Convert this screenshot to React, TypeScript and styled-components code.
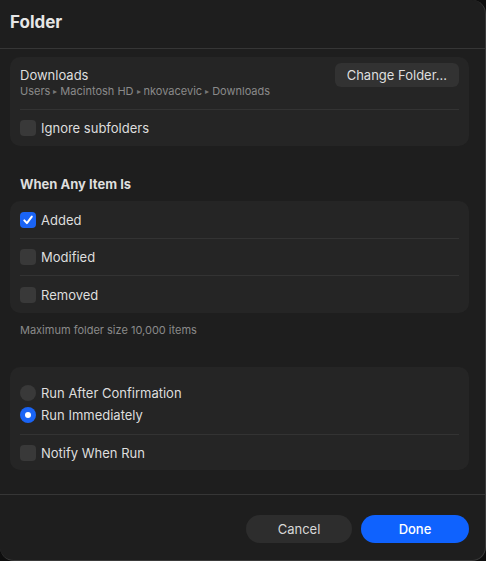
import { createGlobalStyle, styled } from "styled-components";

const GlobalStyle = createGlobalStyle`
  html, body {
    margin: 0;
    padding: 0;
    background: #0e0e0e;
  }
  body {
    font-family: Inter, "Noto Sans", sans-serif;
    -webkit-font-smoothing: antialiased;
  }
`;

const Window = styled.div`
  width: 486px;
  height: 561px;
  box-sizing: border-box;
  background: #1e1e1e;
  border-right: 1px solid #3a3a3a;
  border-bottom: 1px solid #3a3a3a;
  border-radius: 0 14px 14px 14px;
  display: flex;
  flex-direction: column;
  overflow: hidden;
  color: #dedede;
`;

const Header = styled.div`
  height: 49px;
  box-sizing: border-box;
  padding: 12px 10px 0;
  border-bottom: 1px solid #363636;
`;

const Title = styled.h1`
  margin: 0;
  font-size: 17px;
  line-height: 20px;
  font-weight: 700;
  color: #e6e6e6;
`;

const Content = styled.div`
  flex: 1;
  padding: 8px 16px 0 10px;
  display: flex;
  flex-direction: column;
`;

const Card = styled.div<{ $top?: number }>`
  background: #252525;
  border-radius: 10px;
  padding: 0 10px;
  margin-top: ${(p) => p.$top ?? 0}px;
`;

const FolderRow = styled.div`
  display: flex;
  align-items: flex-start;
  justify-content: space-between;
  height: 53px;
  box-sizing: border-box;
  padding-top: 6px;
  border-bottom: 1px solid #333;
`;

const FolderInfo = styled.div`
  padding-top: 4px;
`;

const FolderName = styled.div`
  font-size: 13px;
  line-height: 16px;
  color: #dedede;
`;

const FolderPath = styled.div`
  height: 16px;
  font-size: 11px;
  line-height: 16px;
  color: #8a8a8a;
`;

const Arrow = styled.span`
  font-size: 8px;
  line-height: 0;
  margin: 0 3px;
  vertical-align: 1px;
  color: #777;
`;

const SmallButton = styled.button`
  height: 24px;
  padding: 0 12px;
  border: none;
  border-radius: 6px;
  background: #323232;
  color: #dedede;
  font-family: inherit;
  font-size: 13px;
`;

const Row = styled.div<{ $h: number; $line?: boolean }>`
  box-sizing: border-box;
  height: ${(p) => p.$h}px;
  display: flex;
  align-items: center;
  gap: 5px;
  font-size: 13px;
  color: #dedede;
  border-top: ${(p) => (p.$line ? "1px solid #333" : "none")};
`;

const Box = styled.span<{ $on?: boolean }>`
  width: 16px;
  height: 16px;
  border-radius: 4px;
  background: ${(p) => (p.$on ? "#1a64f5" : "#393939")};
  display: flex;
  align-items: center;
  justify-content: center;
  flex-shrink: 0;
`;

const Radio = styled.span<{ $on?: boolean }>`
  width: 16px;
  height: 16px;
  border-radius: 50%;
  background: ${(p) => (p.$on ? "#1a64f5" : "#393939")};
  display: flex;
  align-items: center;
  justify-content: center;
  flex-shrink: 0;
  &::after {
    content: "";
    display: ${(p) => (p.$on ? "block" : "none")};
    width: 6px;
    height: 6px;
    border-radius: 50%;
    background: #fff;
  }
`;

const SectionTitle = styled.div`
  margin: 30px 0 9px 10px;
  font-size: 13px;
  line-height: 16px;
  font-weight: 700;
  color: #dedede;
`;

const Note = styled.div`
  margin: 10px 0 0 10px;
  font-size: 11px;
  line-height: 14px;
  color: #8a8a8a;
`;

const RadioGroup = styled.div`
  padding: 15px 0 8px;
  border-bottom: 1px solid #333;
`;

const Footer = styled.div`
  height: 66px;
  box-sizing: border-box;
  border-top: 1px solid #363636;
  padding: 20px 16px 0 0;
  display: flex;
  justify-content: flex-end;
  gap: 9px;
`;

const PillButton = styled.button<{ $primary?: boolean; $w: number }>`
  width: ${(p) => p.$w}px;
  height: 28px;
  border: none;
  border-radius: 14px;
  background: ${(p) => (p.$primary ? "#0f62fe" : "#2d2d2d")};
  color: ${(p) => (p.$primary ? "#ffffff" : "#d8d8d8")};
  font-family: inherit;
  font-size: 13px;
  font-weight: ${(p) => (p.$primary ? 500 : 400)};
`;

function Check({ on }: { on?: boolean }) {
  return (
    <Box $on={on}>
      {on ? (
        <svg width="12" height="12" viewBox="0 0 12 12">
          <path
            d="M2.3 6.4 L4.9 9.1 L9.8 2.6"
            fill="none"
            stroke="#fff"
            strokeWidth="2"
            strokeLinecap="round"
            strokeLinejoin="round"
          />
        </svg>
      ) : null}
    </Box>
  );
}

export default function App() {
  return (
    <>
      <GlobalStyle />
      <Window>
        <Header>
          <Title>Folder</Title>
        </Header>
        <Content>
          <Card>
            <FolderRow>
              <FolderInfo>
                <FolderName>Downloads</FolderName>
                <FolderPath>
                  Users<Arrow>▸</Arrow>Macintosh HD<Arrow>▸</Arrow>nkovacevic
                  <Arrow>▸</Arrow>Downloads
                </FolderPath>
              </FolderInfo>
              <SmallButton>Change Folder...</SmallButton>
            </FolderRow>
            <Row $h={36}>
              <Check />
              Ignore subfolders
            </Row>
          </Card>

          <SectionTitle>When Any Item Is</SectionTitle>
          <Card>
            <Row $h={37}>
              <Check on />
              Added
            </Row>
            <Row $h={37} $line>
              <Check />
              Modified
            </Row>
            <Row $h={38} $line>
              <Check />
              Removed
            </Row>
          </Card>
          <Note>Maximum folder size 10,000 items</Note>

          <Card $top={30}>
            <RadioGroup>
              <Row $h={22}>
                <Radio />
                Run After Confirmation
              </Row>
              <Row $h={22}>
                <Radio $on />
                Run Immediately
              </Row>
            </RadioGroup>
            <Row $h={35}>
              <Check />
              Notify When Run
            </Row>
          </Card>
        </Content>
        <Footer>
          <PillButton $w={106}>Cancel</PillButton>
          <PillButton $w={108} $primary>
            Done
          </PillButton>
        </Footer>
      </Window>
    </>
  );
}
